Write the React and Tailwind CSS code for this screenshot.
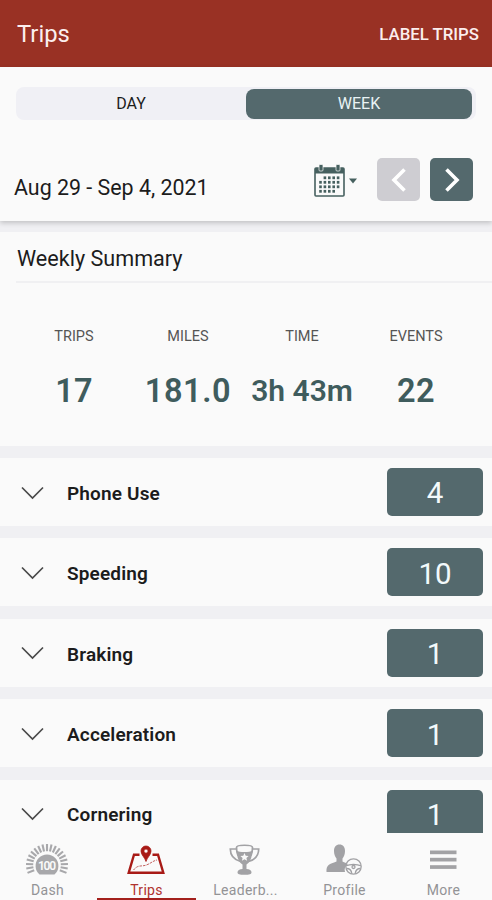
const stats = [
  { label: "TRIPS", value: "17", size: "text-[32.5px] tracking-[0.2px]" },
  { label: "MILES", value: "181.0", size: "text-[32.5px] tracking-[0.6px]" },
  { label: "TIME", value: "3h 43m", size: "text-[30px]" },
  { label: "EVENTS", value: "22", size: "text-[32.5px] tracking-[0.4px]" },
];

const events = [
  { name: "Phone Use", count: 4 },
  { name: "Speeding", count: 10 },
  { name: "Braking", count: 1 },
  { name: "Acceleration", count: 1 },
  { name: "Cornering", count: 1 },
];

function Calendar() {
  const dots = [];
  for (let r = 0; r < 4; r++) {
    for (let c = 0; c < 5; c++) {
      if ((r === 0 && c === 0) || (r === 3 && c === 4)) continue;
      dots.push(<rect key={r + "-" + c} x={5.2 + c * 4.4} y={12.4 + r * 4.5} width="2.6" height="2.8" />);
    }
  }
  return (
    <svg className="h-[33px] w-[31px]" viewBox="0 0 31 33" fill="#46605f">
      <rect x="1" y="4" width="29" height="28" rx="1" fill="#fafafa" stroke="#46605f" strokeWidth="1.6" />
      <rect x="1" y="4" width="29" height="5.5" />
      <rect x="5" y="0.5" width="4" height="6.5" rx="1" stroke="#fafafa" strokeWidth=".7" />
      <rect x="22" y="0.5" width="4" height="6.5" rx="1" stroke="#fafafa" strokeWidth=".7" />
      {dots}
    </svg>
  );
}

function DashIcon() {
  const rays = [];
  for (let i = 0; i < 19; i++) {
    const a = ((-202 + i * (224 / 18)) * Math.PI) / 180;
    rays.push(
      <line
        key={i}
        x1={22 + 13.8 * Math.cos(a)}
        y1={21 + 13.8 * Math.sin(a)}
        x2={22 + 21 * Math.cos(a)}
        y2={21 + 21 * Math.sin(a)}
      />
    );
  }
  return (
    <svg className="h-8 w-11" viewBox="0 0 44 32">
      <g stroke="#a8a8ab" strokeWidth="2.1">{rays}</g>
      <path d="M14.5 30.5a11.4 11.4 0 1 1 15 0z" fill="#a8a8ab" />
      <text x="22" y="26" textAnchor="middle" fontSize="12" fontWeight="600" fill="#fafafa" fontFamily="Roboto, sans-serif" textLength="18">
        100
      </text>
    </svg>
  );
}

function TripsIcon() {
  return (
    <svg className="h-8 w-11" viewBox="0 0 44 32" fill="none" stroke="#a81a16">
      <path d="M15.500 10.700H10L4.700 28.700h34.600L34 10.700h-5.500" strokeWidth="2.4" />
      <path d="M9.500 26c5-6 8-3 13-5s6-4 10.500-5" strokeWidth=".9" strokeDasharray="2.6 1" opacity=".75" />
      <path
        d="M22 17.500c-1-4-5-6.500-5-10.500a5 5 0 0 1 10 0c0 4-4 6.500-5 10.500zM22 5a2.100 2.100 0 1 0 0 4.200a2.100 2.100 0 1 0 0-4.200z"
        fill="#a81a16"
        fillRule="evenodd"
        strokeWidth=".8"
      />
    </svg>
  );
}

function TrophyIcon() {
  return (
    <svg className="h-8 w-11" viewBox="0 0 44 32">
      <g fill="none" stroke="#a2a2a5" strokeWidth="1.700">
        <path d="M13.500 5H7.300c0 7 3 10.500 10.200 12.500M29.500 5h6.200c0 7-3 10.500-10.200 12.500" />
        <path d="M13.500 3.500c0-3 16-3 16 0c0 3.500 0 5-1.500 8M13.500 3.500c0 3.500 0 5 1.500 8" />
      </g>
      <path d="M13.800 6.500c.3 8 2 11.500 5.700 14v4.500c-3 .3-5 1.300-5 3.200s2 2.600 7 2.600s7-.7 7-2.600s-2-2.900-5-3.200v-4.500c3.700-2.500 5.400-6 5.700-14c-2 2-13.400 2-15.400 0z" fill="#a2a2a5" />
      <path d="M21.500 9l1.200 2.700 2.900.3-2.200 1.900.7 2.900-2.600-1.500-2.600 1.500.7-2.900-2.200-1.900 2.900-.3z" fill="#fafafa" />
    </svg>
  );
}

function ProfileIcon() {
  return (
    <svg className="h-8 w-11" viewBox="0 0 44 32">
      <path d="M12 7c0-4 2-6.500 5.500-6.500S23 3 23 7c0 3-1 6-2.500 7.500v3c2 1 4 1.700 5.500 2.500c-3 2-4 5-3 8H4.500c-.5-7 3-8 10-10.500v-3C13 13 12 10 12 7z" fill="#a2a2a5" />
      <g fill="none" stroke="#a2a2a5" strokeWidth="1.300">
        <circle cx="31.500" cy="22.500" r="7.700" />
        <path d="M24 21.500c3 0 4-1.200 7.500-1.200s4.500 1.200 7.500 1.200M24.500 24.500c3 0 5 1.500 5.300 5.300M38.500 24.500c-3 0-5 1.500-5.300 5.300" />
        <circle cx="31.500" cy="23" r="1.500" />
      </g>
    </svg>
  );
}

function MoreIcon() {
  return (
    <svg className="h-8 w-11" viewBox="0 0 44 32" fill="#a2a2a5">
      <rect x="9" y="6.500" width="26.500" height="3.700" />
      <rect x="9" y="13.800" width="26.500" height="3.700" />
      <rect x="9" y="21.200" width="26.500" height="3.700" />
    </svg>
  );
}

const tabs = [
  { label: "Dash", Icon: DashIcon },
  { label: "Trips", Icon: TripsIcon, active: true },
  { label: "Leaderb...", Icon: TrophyIcon },
  { label: "Profile", Icon: ProfileIcon },
  { label: "More", Icon: MoreIcon },
];

export default function App() {
  return (
    <div className="flex h-[900px] w-[492px] flex-col overflow-hidden bg-[#f0f0f3] font-[Roboto,sans-serif] text-[#1c1c1c]">
      <header className="flex h-[67px] shrink-0 items-center justify-between bg-[#993124] pt-[2px] pr-[13px] pl-[17px] text-[#fbeeee]">
        <h1 className="text-[23.800px]">Trips</h1>
        <button className="text-[16.800px] font-medium">LABEL TRIPS</button>
      </header>

      <section className="z-10 h-[154px] shrink-0 bg-[#fafafa] pt-5 shadow-[0_2px_5px_rgba(0,0,0,0.2)]">
        <div className="mx-4 flex h-[33px] items-center rounded-lg bg-[#f0f0f5] text-base">
          <span className="w-[230px] pt-px text-center">DAY</span>
          <span className="flex h-[30px] w-[226px] items-center justify-center rounded-lg bg-[#54696d] pt-px text-[#e9f3f5]">WEEK</span>
        </div>
        <div className="mt-[38px] flex pl-[14px]">
          <span className="w-[300px] pt-[15px] text-[21.400px] leading-[30px]">Aug 29 - Sep 4, 2021</span>
          <div className="mt-[6px] flex h-[33px] w-[63px] items-center">
            <Calendar />
            <svg className="ml-1 h-[6px] w-2" viewBox="0 0 8 6">
              <path d="M0 .5h8L4 5.500z" fill="#46605f" />
            </svg>
          </div>
          <button className="flex h-[43px] w-[43px] items-center justify-center rounded-[5px] bg-[#cecdd2]">
            <svg className="h-6 w-4" viewBox="0 0 16 24" fill="none" stroke="#fff" strokeWidth="3.600">
              <path d="M13.500 1.500L3 12l10.500 10.500" />
            </svg>
          </button>
          <button className="ml-[10px] flex h-[43px] w-[43px] items-center justify-center rounded-[5px] bg-[#54696d]">
            <svg className="h-6 w-4" viewBox="0 0 16 24" fill="none" stroke="#fff" strokeWidth="3.600">
              <path d="M2.500 1.500L13 12L2.500 22.500" />
            </svg>
          </button>
        </div>
      </section>

      <section className="mt-[11px] h-[214px] shrink-0 bg-[#fafafa]">
        <h2 className="ml-4 h-[51px] border-b-2 border-[#f0f0f2] pt-3 pl-px text-[21.600px] leading-[30px]">Weekly Summary</h2>
        <div className="flex pt-[44px] pl-[17px]">
          {stats.map((s) => (
            <div key={s.label} className="flex w-[114px] flex-col items-center">
              <span className="text-[14.500px] leading-5 text-[#555]">{s.label}</span>
              <span className={"mt-[23px] leading-[42px] font-semibold whitespace-nowrap text-[#3f5c5d] " + s.size}>{s.value}</span>
            </div>
          ))}
        </div>
      </section>

      <main className="flex min-h-0 flex-1 flex-col gap-[12.400px] overflow-hidden pt-3">
        {events.map((e) => (
          <div key={e.name} className="flex h-[68px] shrink-0 items-center bg-[#fafafa] pr-[9px] pl-[21px]">
            <svg className="mt-px h-[14px] w-[23px]" viewBox="0 0 23 14" fill="none" stroke="#4a4a4a" strokeWidth="1.700">
              <path d="M1 1.500L11.500 12L22 1.500" />
            </svg>
            <span className="ml-[23px] flex-1 pt-[4px] text-[19px] font-semibold tracking-[0.15px]">{e.name}</span>
            <span className="flex h-12 w-24 items-center justify-center rounded-[5px] bg-[#54696d] pt-[3px] text-[29.500px] text-[#f3fafb]">{e.count}</span>
          </div>
        ))}
      </main>

      <nav className="-mx-[2px] flex h-[67px] shrink-0 bg-[#fafafa]">
        {tabs.map(({ label, Icon, active }) => (
          <div
            key={label}
            className={
              "flex w-[99px] shrink-0 flex-col items-center border-b-2 pt-[11px] text-[14px] leading-5 " +
              (active ? "border-[#a3201c] text-[#b0322e]" : "border-transparent text-[#939396]")
            }
          >
            <span className="mr-[2px] flex h-8">
              <Icon />
            </span>
            <span className="mt-1 h-[15px] tracking-[0.3px]">{label}</span>
          </div>
        ))}
      </nav>
    </div>
  );
}
